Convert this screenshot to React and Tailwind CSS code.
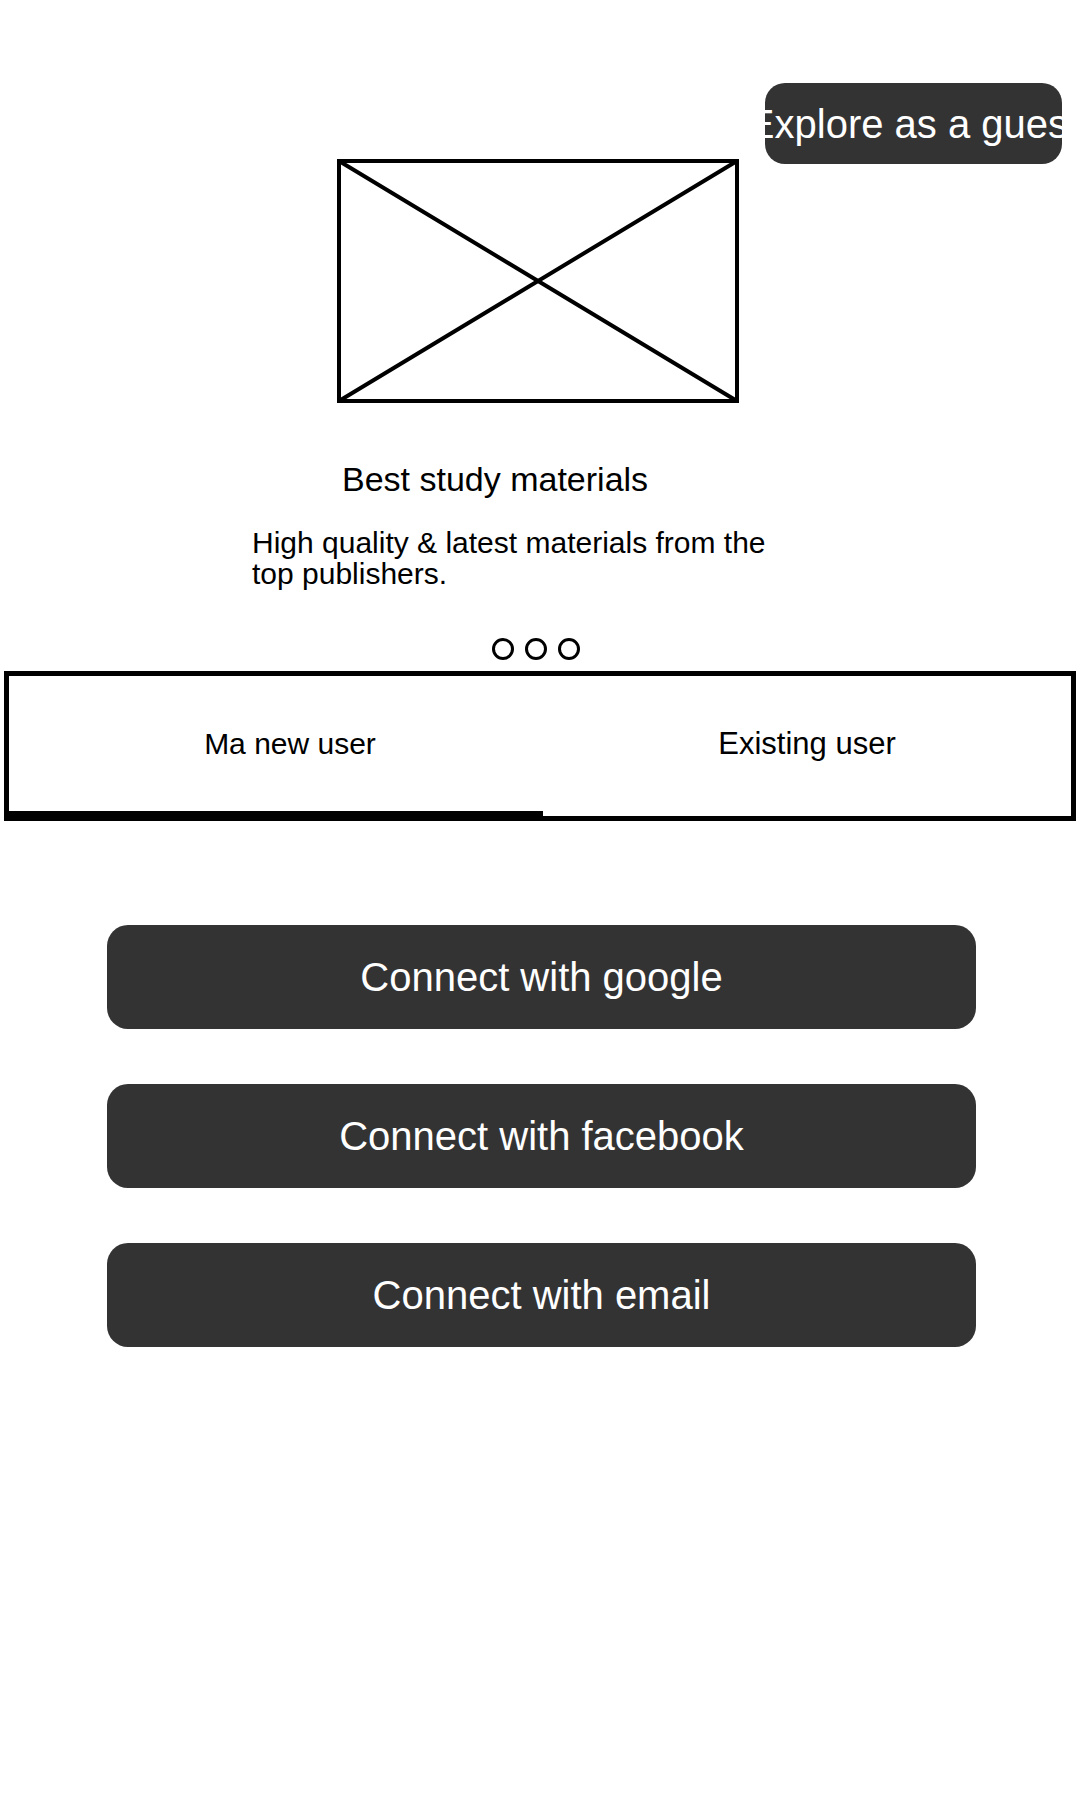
import React from 'react';

const connectOptions = ['Connect with google', 'Connect with facebook', 'Connect with email'];

const ImagePlaceholder = () => (
  <svg width="402" height="244" viewBox="0 0 402 244" className="block">
    <rect x="2" y="2" width="398" height="240" fill="none" stroke="#000" strokeWidth="4" />
    <line x1="2" y1="2" x2="400" y2="242" stroke="#000" strokeWidth="4" strokeLinecap="round" />
    <line x1="400" y1="2" x2="2" y2="242" stroke="#000" strokeWidth="4" strokeLinecap="round" />
  </svg>
);

export default function App() {
  return (
    <div className="w-[1080px] min-h-[1800px] bg-white text-black font-['Liberation_Sans',Arial,sans-serif]">
      {/* top bar */}
      <div className="flex justify-end pt-[83px] pr-[18px]">
        <button className="w-[297px] h-[81px] rounded-[20px] bg-[#333333] text-white text-[40px] leading-none whitespace-nowrap overflow-hidden flex items-center justify-center">
          Explore as a guest
        </button>
      </div>

      {/* onboarding slide */}
      <div className="mt-[-5px] ml-[337px]">
        <ImagePlaceholder />
      </div>
      <h2 className="mt-[60px] ml-[342px] text-[34px] leading-[33px] font-normal">Best study materials</h2>
      <p className="mt-[31px] ml-[252px] w-[530px] text-[30px] leading-[31px]">
        High quality &amp; latest materials from the top publishers.
      </p>

      <div className="mt-[49px] ml-[492px] flex gap-[11px]">
        <span className="w-[22px] h-[22px] rounded-full border-[3px] border-black" />
        <span className="w-[22px] h-[22px] rounded-full border-[3px] border-black" />
        <span className="w-[22px] h-[22px] rounded-full border-[3px] border-black" />
      </div>

      {/* user tabs */}
      <div className="mt-[11px] mx-[4px] h-[150px] border-[5px] border-black flex">
        <div className="w-[534px] shrink-0 flex flex-col">
          <div className="flex-1 flex items-center justify-center pl-[28px] text-[30px] leading-none">Ma new user</div>
          <div className="h-[5px] bg-black" />
        </div>
        <div className="flex-1 flex flex-col">
          <div className="flex-1 flex items-center justify-center text-[31px] leading-none">Existing user</div>
          <div className="h-[5px]" />
        </div>
      </div>

      {/* connect buttons */}
      <div className="mt-[104px] ml-[107px] w-[869px] flex flex-col gap-[55px]">
        {connectOptions.map((label) => (
          <button
            key={label}
            className="h-[104px] rounded-[21px] bg-[#333333] text-white text-[40px] leading-none flex items-center justify-center"
          >
            {label}
          </button>
        ))}
      </div>
    </div>
  );
}
